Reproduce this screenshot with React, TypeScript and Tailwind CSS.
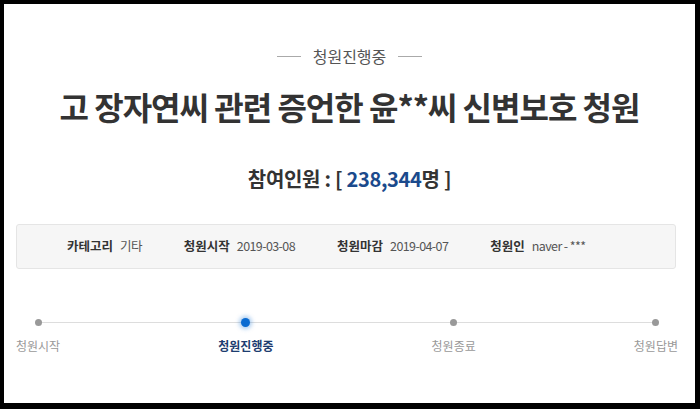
const steps = [
  { label: "청원시작", active: false },
  { label: "청원진행중", active: true },
  { label: "청원종료", active: false },
  { label: "청원답변", active: false },
];

const info = [
  { title: "카테고리", value: "기타" },
  { title: "청원시작", value: "2019-03-08" },
  { title: "청원마감", value: "2019-04-07" },
  { title: "청원인", value: "naver - ***" },
];

const font = "font-['Noto_Sans_CJK_KR','Noto_Sans',sans-serif]";

export default function App() {
  return (
    <div className={`w-[700px] h-[409px] bg-black pt-[4px] pl-[4px] pr-[5px] pb-[6px] ${font}`}>
      <div className="h-full bg-white flex flex-col px-[12px]">
        {/* status */}
        <div className="mt-[39px] flex items-center justify-center gap-[12px] text-[16px] leading-[26px] text-[#555]">
          <span className="w-[24px] h-px bg-[#aaa]" />
          <span>청원진행중</span>
          <span className="w-[24px] h-px bg-[#aaa]" />
        </div>

        {/* title */}
        <h1 className="mt-[17px] text-center text-[32px] leading-[40px] font-bold text-[#333] tracking-[-1px]">
          고 장자연씨 관련 증언한 윤**씨 신변보호 청원
        </h1>

        {/* count */}
        <div className="mt-[38px] text-center text-[20px] leading-[30px] font-bold text-[#333] tracking-[-0.3px]">
          참여인원 : [ <span className="text-[#1b4a8c]">238,344</span>명 ]
        </div>

        {/* info box */}
        <div className="mt-[30px] mr-[7px] h-[45px] bg-[#f6f6f6] border border-[#e5e5e5] rounded-[3px] flex items-center pl-[50px] gap-[42px] text-[12.5px] text-[#555]">
          {info.map((item) => (
            <div key={item.title} className="flex items-center gap-[7px]">
              <span className="font-bold text-[#333] text-[12.5px]">{item.title}</span>
              <span className="tracking-[-0.6px]">{item.value}</span>
            </div>
          ))}
        </div>

        {/* progress */}
        <div className="relative mt-[49px] mr-[5px] flex justify-between">
          <div className="absolute left-[21px] right-[22px] top-[4px] h-px bg-[#ddd]" />
          {steps.map((s) => (
            <div key={s.label} className="relative flex flex-col items-center">
              {s.active ? (
                <span className="w-[9px] h-[9px] rounded-full bg-[#0a6bd1] shadow-[0_0_4px_2px_rgba(10,107,209,0.35)]" />
              ) : (
                <span className="w-[7px] h-[7px] mt-[1px] mb-[1px] rounded-full bg-[#999]" />
              )}
              <span
                className={`mt-[9px] text-[12px] leading-[20px] ${
                  s.active ? "font-bold text-[#1d3d70]" : "text-[#999]"
                }`}
              >
                {s.label}
              </span>
            </div>
          ))}
        </div>
      </div>
    </div>
  );
}
